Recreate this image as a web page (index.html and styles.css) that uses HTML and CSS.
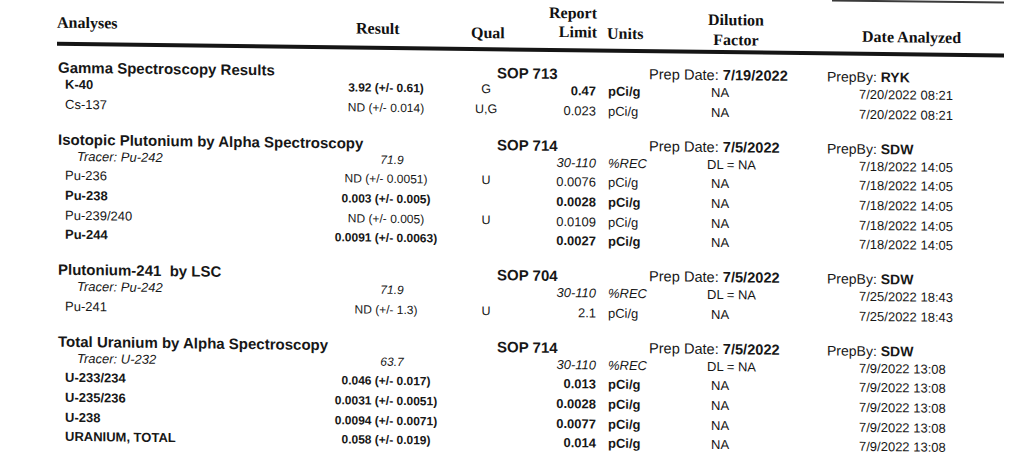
FILE: index.html
```html
<!DOCTYPE html>
<html lang="en">
<head>
<meta charset="utf-8">
<title>Analyses</title>
<link rel="stylesheet" href="styles.css">
</head>
<body>
<div class="page">
  <div class="topline"></div>
  <div class="head">
    <div class="h-analyses">Analyses</div>
    <div class="h-result">Result</div>
    <div class="h-qual">Qual</div>
    <div class="h-rl">Report<br>Limit</div>
    <div class="h-units">Units</div>
    <div class="h-dil">Dilution<br>Factor</div>
    <div class="h-date">Date Analyzed</div>
  </div>
  <div class="rule"></div>

  <div class="sec first">
    <div class="sh">
      <div class="name">Gamma Spectroscopy Results</div>
      <div class="sop">SOP 713</div>
      <div class="prep">Prep Date: <b>7/19/2022</b></div>
      <div class="prepby">PrepBy: <b>RYK</b></div>
    </div>
    <div class="row b">
      <div class="nm">K-40</div><div class="res">3.92 (+/- 0.61)</div><div class="qual">G</div><div class="rl">0.47</div><div class="unit">pCi/g</div><div class="dil">NA</div><div class="date">7/20/2022 08:21</div>
    </div>
    <div class="row">
      <div class="nm">Cs-137</div><div class="res">ND (+/- 0.014)</div><div class="qual">U,G</div><div class="rl">0.023</div><div class="unit">pCi/g</div><div class="dil">NA</div><div class="date">7/20/2022 08:21</div>
    </div>
  </div>

  <div class="sec">
    <div class="sh">
      <div class="name">Isotopic Plutonium by Alpha Spectroscopy</div>
      <div class="sop">SOP 714</div>
      <div class="prep">Prep Date: <b>7/5/2022</b></div>
      <div class="prepby">PrepBy: <b>SDW</b></div>
    </div>
    <div class="row tr">
      <div class="nm">Tracer: Pu-242</div><div class="res">71.9</div><div class="qual"></div><div class="rl">30-110</div><div class="unit">%REC</div><div class="dil">DL = NA</div><div class="date">7/18/2022 14:05</div>
    </div>
    <div class="row">
      <div class="nm">Pu-236</div><div class="res">ND (+/- 0.0051)</div><div class="qual">U</div><div class="rl">0.0076</div><div class="unit">pCi/g</div><div class="dil">NA</div><div class="date">7/18/2022 14:05</div>
    </div>
    <div class="row b">
      <div class="nm">Pu-238</div><div class="res">0.003 (+/- 0.005)</div><div class="qual"></div><div class="rl">0.0028</div><div class="unit">pCi/g</div><div class="dil">NA</div><div class="date">7/18/2022 14:05</div>
    </div>
    <div class="row">
      <div class="nm">Pu-239/240</div><div class="res">ND (+/- 0.005)</div><div class="qual">U</div><div class="rl">0.0109</div><div class="unit">pCi/g</div><div class="dil">NA</div><div class="date">7/18/2022 14:05</div>
    </div>
    <div class="row b">
      <div class="nm">Pu-244</div><div class="res">0.0091 (+/- 0.0063)</div><div class="qual"></div><div class="rl">0.0027</div><div class="unit">pCi/g</div><div class="dil">NA</div><div class="date">7/18/2022 14:05</div>
    </div>
  </div>

  <div class="sec">
    <div class="sh">
      <div class="name">Plutonium-241&nbsp; by LSC</div>
      <div class="sop">SOP 704</div>
      <div class="prep">Prep Date: <b>7/5/2022</b></div>
      <div class="prepby">PrepBy: <b>SDW</b></div>
    </div>
    <div class="row tr">
      <div class="nm">Tracer: Pu-242</div><div class="res">71.9</div><div class="qual"></div><div class="rl">30-110</div><div class="unit">%REC</div><div class="dil">DL = NA</div><div class="date">7/25/2022 18:43</div>
    </div>
    <div class="row">
      <div class="nm">Pu-241</div><div class="res">ND (+/- 1.3)</div><div class="qual">U</div><div class="rl">2.1</div><div class="unit">pCi/g</div><div class="dil">NA</div><div class="date">7/25/2022 18:43</div>
    </div>
  </div>

  <div class="sec">
    <div class="sh">
      <div class="name">Total Uranium by Alpha Spectroscopy</div>
      <div class="sop">SOP 714</div>
      <div class="prep">Prep Date: <b>7/5/2022</b></div>
      <div class="prepby">PrepBy: <b>SDW</b></div>
    </div>
    <div class="row tr">
      <div class="nm">Tracer: U-232</div><div class="res">63.7</div><div class="qual"></div><div class="rl">30-110</div><div class="unit">%REC</div><div class="dil">DL = NA</div><div class="date">7/9/2022 13:08</div>
    </div>
    <div class="row b">
      <div class="nm">U-233/234</div><div class="res">0.046 (+/- 0.017)</div><div class="qual"></div><div class="rl">0.013</div><div class="unit">pCi/g</div><div class="dil">NA</div><div class="date">7/9/2022 13:08</div>
    </div>
    <div class="row b">
      <div class="nm">U-235/236</div><div class="res">0.0031 (+/- 0.0051)</div><div class="qual"></div><div class="rl">0.0028</div><div class="unit">pCi/g</div><div class="dil">NA</div><div class="date">7/9/2022 13:08</div>
    </div>
    <div class="row b">
      <div class="nm">U-238</div><div class="res">0.0094 (+/- 0.0071)</div><div class="qual"></div><div class="rl">0.0077</div><div class="unit">pCi/g</div><div class="dil">NA</div><div class="date">7/9/2022 13:08</div>
    </div>
    <div class="row b">
      <div class="nm">URANIUM, TOTAL</div><div class="res">0.058 (+/- 0.019)</div><div class="qual"></div><div class="rl">0.014</div><div class="unit">pCi/g</div><div class="dil">NA</div><div class="date">7/9/2022 13:08</div>
    </div>
  </div>
</div>
</body>
</html>
```
FILE: styles.css
```css
html, body {
  margin: 0;
  padding: 0;
  background: #ffffff;
}
body {
  width: 1024px;
  height: 476px;
  overflow: hidden;
  color: #171717;
  font-family: "Liberation Sans", Arial, sans-serif;
}
.page {
  width: 1024px;
  margin-top: -11.5px;
  transform: skewY(0.72deg);
  transform-origin: 0 0;
}
.topline {
  margin-left: 832px;
  width: 172px;
  height: 2px;
  background: #3a3a3a;
}
.head {
  height: 49.5px;
  display: grid;
  grid-template-columns: 356px 115px 49px 77px 93px 92px 1fr;
  align-items: end;
  font-family: "Liberation Serif", "Times New Roman", serif;
  font-weight: bold;
  font-size: 16px;
  line-height: 19px;
  color: #111;
  white-space: nowrap;
}
.h-analyses { padding-left: 57px; padding-bottom: 10px; }
.h-result { padding-bottom: 8px; }
.h-qual { padding-bottom: 5px; }
.h-rl { text-align: right; padding-bottom: 6.4px; }
.h-units { padding-left: 10px; padding-bottom: 6px; }
.h-dil { text-align: center; line-height: 20px; padding-bottom: 0; }
.h-date { padding-left: 80px; padding-bottom: 6px; }
.rule {
  margin-left: 57px;
  width: 947px;
  height: 4px;
  background: #151515;
}
.sec { margin-top: 17.15px; }
.sec.first { margin-top: 14.5px; }
.sh {
  display: grid;
  grid-template-columns: 497px 152px 178px 1fr;
  height: 15px;
  line-height: 15px;
  font-size: 15px;
  white-space: nowrap;
}
.sh .name { padding-left: 58px; font-weight: bold; }
.sh .sop { font-weight: bold; }
.sh .prep { font-size: 14.6px; }
.sh .prepby { font-size: 14px; }
.row {
  display: grid;
  grid-template-columns: 330px 112px 88px 66px 104px 120px 1fr;
  height: 19.7px;
  line-height: 19.7px;
  font-size: 13px;
  white-space: nowrap;
}
.row .nm { padding-left: 65px; }
.row .res { text-align: center; font-size: 12px; }
.row .qual { text-align: center; font-size: 12.5px; font-weight: normal; }
.row .rl { text-align: right; }
.row .unit { padding-left: 12px; }
.row .dil { padding-left: 11px; font-weight: normal; }
.row .date { padding-left: 39px; font-weight: normal; }
.row.b .nm, .row.b .res, .row.b .rl, .row.b .unit { font-weight: bold; }
.row.tr .nm { padding-left: 77px; font-style: italic; }
.row.tr .res { font-style: italic; padding-left: 12px; }
.row.tr .rl, .row.tr .unit { font-style: italic; }
.row.tr .dil { padding-left: 7px; }
```
